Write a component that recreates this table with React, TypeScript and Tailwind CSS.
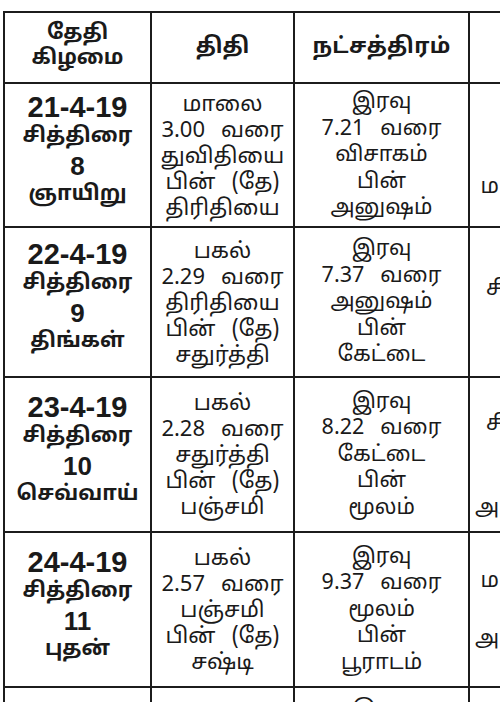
const font = "font-['Noto_Sans_Tamil','Latha','Noto_Sans',sans-serif]";

type Row = {
  date: string;
  month: string;
  day: string;
  week: string;
  tithi: string[];
  star: string[];
  yoga: string[];
  yogaCls: string;
  h: string;
};

const rows: Row[] = [
  {
    date: "21-4-19",
    month: "சித்திரை",
    day: "8",
    week: "ஞாயிறு",
    tithi: ["மாலை", "3.00|வரை", "துவிதியை", "பின்|(தே)", "திரிதியை"],
    star: ["இரவு", "7.21|வரை", "விசாகம்", "பின்", "அனுஷம்"],
    yoga: ["இரவு", "வரை", "மரணயோகம்"],
    yogaCls: "leading-[28px] pt-[10px]",
    h: "h-[144px]",
  },
  {
    date: "22-4-19",
    month: "சித்திரை",
    day: "9",
    week: "திங்கள்",
    tithi: ["பகல்", "2.29|வரை", "திரிதியை", "பின்|(தே)", "சதுர்த்தி"],
    star: ["இரவு", "7.37|வரை", "அனுஷம்", "பின்", "கேட்டை"],
    yoga: ["சித்தயோகம்", ""],
    yogaCls: "leading-[24px]",
    h: "h-[150px]",
  },
  {
    date: "23-4-19",
    month: "சித்திரை",
    day: "10",
    week: "செவ்வாய்",
    tithi: ["பகல்", "2.28|வரை", "சதுர்த்தி", "பின்|(தே)", "பஞ்சமி"],
    star: ["இரவு", "8.22|வரை", "கேட்டை", "பின்", "மூலம்"],
    yoga: ["", "சித்தயோகம்", "பின்", "", "அமிர்தயோகம்"],
    yogaCls: "leading-[28px] -mt-[4px]",
    h: "h-[155px]",
  },
  {
    date: "24-4-19",
    month: "சித்திரை",
    day: "11",
    week: "புதன்",
    tithi: ["பகல்", "2.57|வரை", "பஞ்சமி", "பின்|(தே)", "சஷ்டி"],
    star: ["இரவு", "9.37|வரை", "மூலம்", "பின்", "பூராடம்"],
    yoga: ["", "மரணயோகம்", "பின்", "அமிர்தயோகம்", ""],
    yogaCls: "leading-[29px] pt-[1px]",
    h: "h-[155px]",
  },
];

// "a|b" = two words spread wide apart, as typeset in the paper
function Lines({ items, cls }: { items: string[]; cls: string }) {
  return (
    <div className={cls}>
      {items.map((t, i) => {
        const parts = t.split("|");
        return (
          <div key={i} className="flex justify-center gap-[16px] whitespace-nowrap">
            {t ? parts.map((p, j) => <span key={j}>{p}</span>) : "\u00a0"}
          </div>
        );
      })}
    </div>
  );
}

export default function App() {
  const cell = "border-[2.5px] border-[#1c1c1c] text-center align-middle p-0";
  return (
    <div className={`w-[500px] h-[702px] overflow-hidden bg-white pl-[3px] pt-[11px] text-[#1a1a1a] ${font}`}>
      <table className="table-fixed border-collapse w-[640px]">
        <colgroup>
          <col className="w-[147px]" />
          <col className="w-[143px]" />
          <col className="w-[175px]" />
          <col className="w-[175px]" />
        </colgroup>
        <thead>
          <tr className="h-[71px]">
            <th className={`${cell} text-[21px] font-bold leading-[25px]`}>
              <div className="-mt-[1px]">தேதி</div>
              <div>கிழமை</div>
            </th>
            <th className={`${cell} text-[22px] font-bold`}>திதி</th>
            <th className={`${cell} text-[22px] font-bold tracking-[0.3px]`}>நட்சத்திரம்</th>
            <th className={`${cell} text-[22px] font-bold`}>யோகம்</th>
          </tr>
        </thead>
        <tbody>
          {rows.map((r) => (
            <tr key={r.date} className={r.h}>
              <td className={cell}>
                <div className="font-bold -mt-[8px]">
                  <div className="text-[29px] leading-[31px] font-['Liberation_Sans',sans-serif] font-bold">
                    {r.date}
                  </div>
                  <div className="text-[21px] leading-[29px]">{r.month}</div>
                  <div className="text-[26px] leading-[29px] font-['Liberation_Sans',sans-serif]">
                    {r.day}
                  </div>
                  <div className="text-[21px] leading-[29px]">{r.week}</div>
                </div>
              </td>
              <td className={cell}>
                <Lines items={r.tithi} cls="text-[22px] leading-[26px] pt-[5px]" />
              </td>
              <td className={cell}>
                <Lines items={r.star} cls="text-[21.5px] leading-[26.5px] pt-[3px]" />
              </td>
              <td className={cell}>
                <Lines items={r.yoga} cls={`text-[21.5px] ${r.yogaCls}`} />
              </td>
            </tr>
          ))}
          <tr className="h-[60px]">
            <td className={cell}></td>
            <td className={cell}></td>
            <td className={`${cell} align-top`}>
              <div className="text-[21.5px] leading-[26px] pt-[9px]">இரவு</div>
            </td>
            <td className={cell}></td>
          </tr>
        </tbody>
      </table>
    </div>
  );
}
